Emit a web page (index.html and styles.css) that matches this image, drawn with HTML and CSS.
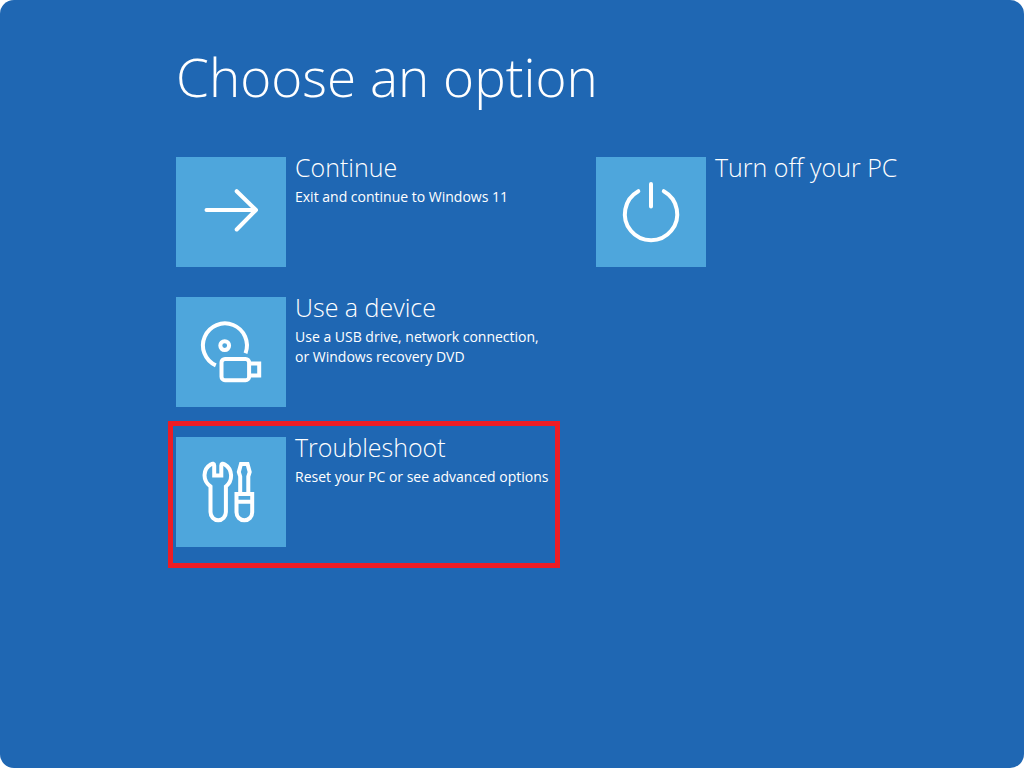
FILE: index.html
```html
<!DOCTYPE html>
<html lang="en">
<head>
  <meta charset="UTF-8">
  <meta name="viewport" content="width=device-width, initial-scale=1.0">
  <title>Choose an option</title>
  <link rel="stylesheet" href="styles.css">
</head>
<body>
  <main class="screen">
    <h1>Choose an option</h1>
    <div class="options">
      <div class="column">
        <button class="option" type="button">
          <svg class="tile" viewBox="0 0 110 110" aria-hidden="true">
            <path class="round" d="M30.500 53H80M60.700 34.200L80 53L60.700 72.500"/>
          </svg>
          <span class="text">
            <span class="name">Continue</span>
            <span class="info">Exit and continue to Windows 11</span>
          </span>
        </button>
        <button class="option" type="button">
          <svg class="tile" viewBox="0 0 110 110" aria-hidden="true">
            <path d="M39.800 68.400A22 22 0 1 1 69.500 56.200"/>
            <circle cx="48.700" cy="48.600" r="4.400"/>
            <rect x="45.500" y="62" width="27.600" height="21.200" rx="3.500"/>
            <path d="M73 66.500H83.200V78.500H73"/>
          </svg>
          <span class="text">
            <span class="name">Use a device</span>
            <span class="info">Use a USB drive, network connection,<br>or Windows recovery DVD</span>
          </span>
        </button>
        <button class="option selected" type="button">
          <svg class="tile" viewBox="0 0 110 110" aria-hidden="true">
            <path d="M38.200 28.500V38.500H45.300V28.500C45.300 26.500 47 26.300 48.500 27.300C56.500 32 57.500 43.500 49.900 49.500V75A7.700 8.200 0 0 1 34.500 75V49.500C26 43.500 27 32 35 27.300C36.500 26.300 38.200 26.500 38.200 28.500Z"/>
            <path d="M64.200 56V39.500L62.800 35L65 27H71.500L73.700 35L72.300 39.500V56"/>
            <path d="M60.500 57H76.200V75.300A7.800 8 0 0 1 60.500 75.300ZM60.500 64.700H76.200"/>
          </svg>
          <span class="text">
            <span class="name">Troubleshoot</span>
            <span class="info">Reset your PC or see advanced options</span>
          </span>
        </button>
      </div>
      <div class="column">
        <button class="option" type="button">
          <svg class="tile" viewBox="0 0 110 110" aria-hidden="true">
            <path class="round" d="M42.300 34.200A26.200 26.200 0 1 0 67.800 34.200M55 27V49.500"/>
          </svg>
          <span class="text">
            <span class="name">Turn off your PC</span>
          </span>
        </button>
      </div>
    </div>
  </main>
</body>
</html>
```
FILE: styles.css
```css
body {
  margin: 0;
  background-color: #fff;
  font-family: "Open Sans", "Noto Sans", sans-serif;
  color: #fff;
}

.screen {
  box-sizing: border-box;
  min-height: 100vh;
  padding: 41px 64px 42px 176px;
  background-color: #1f67b3;
  border-radius: 14px;
}

h1 {
  margin: 0 0 44px;
  font-size: 53px;
  font-weight: 300;
  line-height: 72px;
}

.options {
  display: grid;
  grid-template-columns: 384px 1fr;
  gap: 36px;
}

.column {
  display: flex;
  flex-direction: column;
  gap: 30px;
}

.option {
  position: relative;
  display: flex;
  align-items: flex-start;
  gap: 9px;
  padding: 0;
  border: none;
  background: none;
  color: #fff;
  font-family: inherit;
  text-align: left;
  cursor: pointer;
}

/* red frame around the option to pick */
.option.selected::after {
  content: "";
  position: absolute;
  top: -16px;
  right: 0;
  bottom: -21px;
  left: -8px;
  border: 5px solid #ed1c24;
}

.tile {
  flex: none;
  width: 110px;
  height: 110px;
  background-color: #4ea6dc;
  fill: none;
  stroke: #fff;
  stroke-width: 4px;
}

.round {
  stroke-linecap: round;
  stroke-linejoin: round;
}

.text {
  display: flex;
  flex-direction: column;
  gap: 10px;
  white-space: nowrap;
}

.name {
  font-size: 25px;
  font-weight: 300;
  line-height: 20px;
}

.info {
  font-size: 14px;
  line-height: 20px;
}

.option:hover .tile {
  background-color: #62b3e4;
}
```
